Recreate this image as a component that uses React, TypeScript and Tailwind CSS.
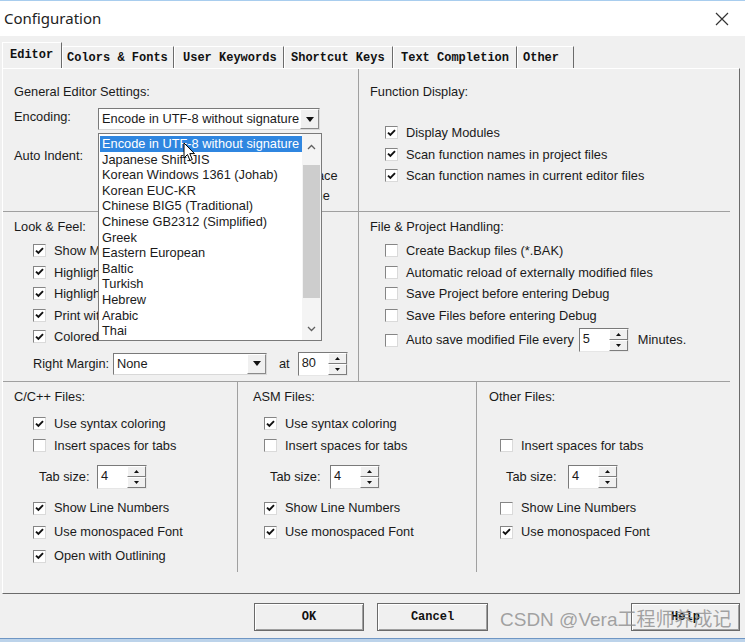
import type { ReactNode } from 'react';

const sans = "font-['Liberation_Sans',Arial,sans-serif]";
const mono = "font-['Liberation_Mono','Courier_New',monospace]";

function Check({ on }: { on?: boolean }) {
  return (
    <span className="flex h-[13px] w-[13px] shrink-0 items-center justify-center border border-t-[#858585] border-l-[#858585] border-r-[#dadada] border-b-[#dadada] bg-white">
      {on && (
        <svg width="9" height="8" viewBox="0 0 9 8">
          <path d="M1 3.6 L3.4 6 L8 1.2" stroke="#111" strokeWidth="1.9" fill="none" />
        </svg>
      )}
    </span>
  );
}

function CheckRow({ on, label, className = 'h-[21.5px]' }: { on?: boolean; label: string; className?: string }) {
  return (
    <div className={`flex items-center gap-[8px] whitespace-nowrap ${className}`}>
      <Check on={on} />
      <span>{label}</span>
    </div>
  );
}

function SpinBtn({ up }: { up?: boolean }) {
  return (
    <span className="flex flex-1 items-center justify-center border border-t-white border-l-white border-r-[#7d7d7d] border-b-[#7d7d7d] bg-[#f0f0f0]">
      <svg width="5" height="3" viewBox="0 0 5 3">
        <path d={up ? 'M0 3 L2.5 0 L5 3Z' : 'M0 0 L5 0 L2.5 3Z'} fill="#111" />
      </svg>
    </span>
  );
}

function Spin({ value, className = '' }: { value: string; className?: string }) {
  return (
    <div className={`flex h-[24px] w-[50px] shrink-0 border border-t-[#7a7a7a] border-l-[#7a7a7a] border-r-[#e6e6e6] border-b-[#e6e6e6] bg-white ${className}`}>
      <span className="flex-1 pl-[3px] leading-[20px]">{value}</span>
      <div className="flex w-[19px] flex-col">
        <SpinBtn up />
        <SpinBtn />
      </div>
    </div>
  );
}

function Select({ text, className = '' }: { text: string; className?: string }) {
  return (
    <div className={`flex h-[22px] shrink-0 border border-t-[#7a7a7a] border-l-[#7a7a7a] border-r-[#d8d8d8] border-b-[#d8d8d8] bg-white ${className}`}>
      <span className="flex-1 overflow-hidden whitespace-nowrap pl-[3px] leading-[20px]">{text}</span>
      <span className="flex w-[19px] items-center justify-center border border-t-white border-l-white border-r-[#8a8a8a] border-b-[#8a8a8a] bg-[#f0f0f0]">
        <svg width="8" height="5" viewBox="0 0 8 5">
          <path d="M0 0 L8 0 L4 5Z" fill="#111" />
        </svg>
      </span>
    </div>
  );
}

function Tab({ label, w, pl, active }: { label: string; w: string; pl: string; active?: boolean }) {
  return (
    <div
      className={`flex items-center border border-t-white border-l-white border-b-0 border-r-[#6b6b6b] ${w} ${pl} ${
        active ? 'h-[26px] pb-[2px]' : 'h-[22px]'
      }`}
    >
      {label}
    </div>
  );
}

function Button({ children, className = '' }: { children: ReactNode; className?: string }) {
  return (
    <div
      className={`flex h-[28px] items-center justify-center border border-[#6a6a6a] bg-[#f0f0f0] shadow-[inset_1px_1px_0_#ffffff,inset_-1px_-1px_0_#a0a0a0] ${className}`}
    >
      {children}
    </div>
  );
}

const encodings = [
  'Encode in UTF-8 without signature',
  'Japanese Shift-JIS',
  'Korean Windows 1361 (Johab)',
  'Korean EUC-KR',
  'Chinese BIG5 (Traditional)',
  'Chinese GB2312 (Simplified)',
  'Greek',
  'Eastern European',
  'Baltic',
  'Turkish',
  'Hebrew',
  'Arabic',
  'Thai',
];

export default function App() {
  return (
    <div className={`relative flex h-[642px] w-[745px] flex-col overflow-hidden bg-[#f0f0f0] text-[12.8px] text-[#1a1a1a] ${sans}`}>
      {/* title bar */}
      <div className="flex h-[36px] shrink-0 items-center justify-between border-t border-[#a8cdee] bg-white pl-[4px] pr-[16px]">
        <span className="font-['Noto_Sans',sans-serif] text-[15px] text-[#222]">Configuration</span>
        <svg width="14" height="14" viewBox="0 0 14 14">
          <path d="M1 1 L13 13 M13 1 L1 13" stroke="#333" strokeWidth="1.2" />
        </svg>
      </div>

      {/* tabs */}
      <div className={`flex h-[32px] shrink-0 items-end pl-[2px] text-[12px] font-bold text-[#111] ${mono}`}>
        <Tab label="Editor" w="w-[60px]" pl="pl-[7px]" active />
        <Tab label="Colors & Fonts" w="w-[112px]" pl="pl-[4px]" />
        <Tab label="User Keywords" w="w-[110px]" pl="pl-[8px]" />
        <Tab label="Shortcut Keys" w="w-[109px]" pl="pl-[6px]" />
        <Tab label="Text Completion" w="w-[124px]" pl="pl-[7px]" />
        <Tab label="Other" w="w-[57px]" pl="pl-[5px]" />
      </div>

      {/* panel */}
      <div className="ml-[2px] flex h-[526px] w-[738px] shrink-0 flex-col border border-t-white border-l-white border-r-[#6b6b6b] border-b-[#6b6b6b]">
        {/* row 1 */}
        <div className="flex h-[143px] shrink-0">
          <div className="w-[356px] shrink-0 border-r border-b border-[#a0a0a0] pl-[11px] pt-[15px]">
            <div className="leading-[16px]">General Editor Settings:</div>
            <div className="mt-[8px] flex">
              <span className="w-[84px] pt-[1px] leading-[16px]">Encoding:</span>
              <Select text="Encode in UTF-8 without signature" className="w-[222px]" />
            </div>
            <div className="mt-[16px] flex">
              <span className="w-[84px] pt-[2px] leading-[16px]">Auto Indent:</span>
              <Select text="Smart" className="w-[112px]" />
              <div className="ml-[3px] flex flex-col">
                <CheckRow on label="Virtual Spaces" className="h-[20px]" />
                <CheckRow on label="View White Space" className="h-[20px]" />
                <CheckRow label="View End of Line" className="h-[20px]" />
              </div>
            </div>
          </div>
          <div className="mr-[9px] flex-1 border-b border-[#a0a0a0] pl-[11px] pt-[15px]">
            <div className="leading-[16px]">Function Display:</div>
            <div className="ml-[15px] mt-[22px]">
              <CheckRow on label="Display Modules" />
              <CheckRow on label="Scan function names in project files" />
              <CheckRow on label="Scan function names in current editor files" />
            </div>
          </div>
        </div>

        {/* row 2 */}
        <div className="flex h-[170px] shrink-0">
          <div className="w-[356px] shrink-0 border-r border-b border-[#a0a0a0] pl-[11px] pt-[7px]">
            <div className="leading-[16px]">Look &amp; Feel:</div>
            <div className="ml-[19px] mt-[5px]">
              <CheckRow on label="Show Message Dialogs" />
              <CheckRow on label="Highlight Current Line" />
              <CheckRow on label="Highlight matching braces" />
              <CheckRow on label="Print with syntax coloring" />
              <CheckRow on label="Colored Editor Tabs" />
              <div className="mt-[4px] flex items-center">
                <span className="w-[80px]">Right Margin:</span>
                <Select text="None" className="w-[154px]" />
                <span className="ml-[12px]">at</span>
                <Spin value="80" className="ml-[8px] h-[23px]" />
              </div>
            </div>
          </div>
          <div className="mr-[9px] flex-1 border-b border-[#a0a0a0] pl-[11px] pt-[7px]">
            <div className="leading-[16px]">File &amp; Project Handling:</div>
            <div className="ml-[15px] mt-[5px]">
              <CheckRow label="Create Backup files (*.BAK)" />
              <CheckRow label="Automatic reload of externally modified files" />
              <CheckRow label="Save Project before entering Debug" />
              <CheckRow label="Save Files before entering Debug" />
              <div className="mt-[2px] flex h-[24px] items-center whitespace-nowrap">
                <Check />
                <span className="ml-[8px]">Auto save modified File every</span>
                <Spin value="5" className="ml-[5px]" />
                <span className="ml-[9px]">Minutes.</span>
              </div>
            </div>
          </div>
        </div>

        {/* row 3 */}
        <div className="flex flex-1 items-start">
          <div className="h-[190px] w-[235px] shrink-0 border-r border-[#a0a0a0] pl-[11px] pt-[7px]">
            <div className="leading-[16px]">C/C++ Files:</div>
            <div className="ml-[19px] mt-[8px]">
              <CheckRow on label="Use syntax coloring" />
              <CheckRow label="Insert spaces for tabs" />
            </div>
            <div className="ml-[25px] mt-[9px] flex h-[24px] items-center">
              <span className="w-[58px]">Tab size:</span>
              <Spin value="4" />
            </div>
            <div className="ml-[19px] mt-[7px]">
              <CheckRow on label="Show Line Numbers" className="h-[24px]" />
              <CheckRow on label="Use monospaced Font" className="h-[24px]" />
              <CheckRow on label="Open with Outlining" className="h-[24px]" />
            </div>
          </div>
          <div className="h-[190px] w-[239px] shrink-0 border-r border-[#a0a0a0] pl-[15px] pt-[7px]">
            <div className="leading-[16px]">ASM Files:</div>
            <div className="ml-[11px] mt-[8px]">
              <CheckRow on label="Use syntax coloring" />
              <CheckRow label="Insert spaces for tabs" />
            </div>
            <div className="ml-[17px] mt-[9px] flex h-[24px] items-center">
              <span className="w-[60px]">Tab size:</span>
              <Spin value="4" />
            </div>
            <div className="ml-[11px] mt-[7px]">
              <CheckRow on label="Show Line Numbers" className="h-[24px]" />
              <CheckRow on label="Use monospaced Font" className="h-[24px]" />
            </div>
          </div>
          <div className="h-[190px] flex-1 pl-[12px] pt-[7px]">
            <div className="leading-[16px]">Other Files:</div>
            <div className="ml-[11px] mt-[8px]">
              <div className="h-[21.5px]" />
              <CheckRow label="Insert spaces for tabs" />
            </div>
            <div className="ml-[17px] mt-[9px] flex h-[24px] items-center">
              <span className="w-[62px]">Tab size:</span>
              <Spin value="4" />
            </div>
            <div className="ml-[11px] mt-[7px]">
              <CheckRow label="Show Line Numbers" className="h-[24px]" />
              <CheckRow on label="Use monospaced Font" className="h-[24px]" />
            </div>
          </div>
        </div>
      </div>

      {/* buttons */}
      <div className={`flex h-[44px] shrink-0 items-start pt-[9px] text-[12px] font-bold text-[#111] ${mono}`}>
        <Button className="ml-[254px] w-[110px]">OK</Button>
        <Button className="ml-[13px] w-[111px]">Cancel</Button>
        <Button className="ml-[143px] w-[109px]">Help</Button>
      </div>
      <div className="h-[4px] shrink-0 border-t border-[#6f96c4] bg-[#bcd3ea]" />

      {/* open encoding dropdown */}
      <div className="absolute left-[98px] top-[133px] flex h-[208px] w-[224px] border border-[#7a7a7a] bg-white">
        <div className="w-[203px] pl-[1px] pt-[2px]">
          {encodings.map((e, i) => (
            <div
              key={e}
              className={`h-[15.6px] whitespace-nowrap pl-[2px] leading-[15.6px] ${i === 0 ? 'bg-[#2f86e0] text-white' : ''}`}
            >
              {e}
            </div>
          ))}
        </div>
        <div className="flex w-[19px] flex-col bg-[#f4f4f4]">
          <div className="flex h-[26px] items-center justify-center">
            <svg width="9" height="6" viewBox="0 0 9 6">
              <path d="M1 5 L4.5 1.5 L8 5" stroke="#606060" strokeWidth="1.3" fill="none" />
            </svg>
          </div>
          <div className="mx-auto mt-[5px] h-[133px] w-[17px] bg-[#cdcdcd]" />
          <div className="flex-1" />
          <div className="flex h-[22px] items-center justify-center">
            <svg width="9" height="6" viewBox="0 0 9 6">
              <path d="M1 1 L4.5 4.5 L8 1" stroke="#606060" strokeWidth="1.3" fill="none" />
            </svg>
          </div>
        </div>
      </div>

      {/* mouse pointer */}
      <svg className="absolute left-[183px] top-[142px]" width="13" height="21" viewBox="0 0 13 21">
        <path d="M1 1 L1 16 L4.5 12.5 L7 18.5 L9.3 17.5 L6.8 11.6 L11.5 11.6 Z" fill="#fff" stroke="#000" strokeWidth="1" strokeLinejoin="round" />
      </svg>

      {/* watermark */}
      <div className="absolute left-[500px] top-[607px] font-['Liberation_Sans','Noto_Sans_CJK_SC',sans-serif] text-[19px] leading-[26px] text-[#8c8c8c]/80">
        CSDN @Vera工程师养成记
      </div>
    </div>
  );
}
